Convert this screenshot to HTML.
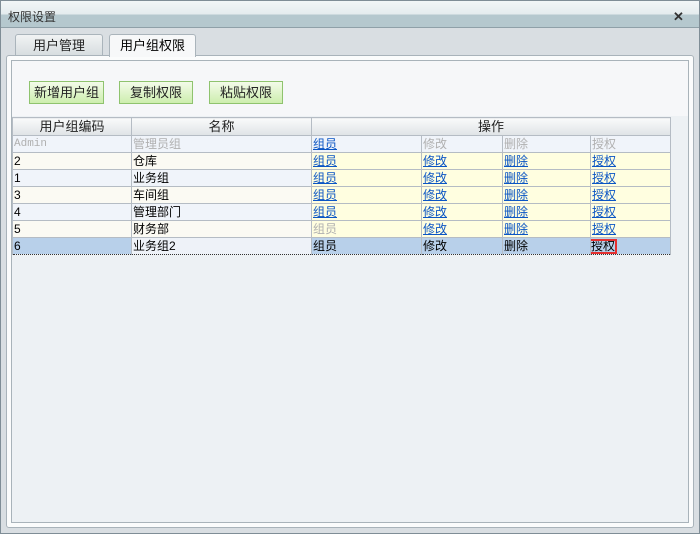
<!DOCTYPE html>
<html><head><meta charset="utf-8"><style>
*{margin:0;padding:0;box-sizing:border-box}
body{width:700px;height:534px;background:#d9dee2;font-family:"Liberation Sans","WenQuanYi Zen Hei","Noto Sans CJK SC",sans-serif;font-size:12px;position:relative;overflow:hidden;color:#000}
.frame{position:absolute;left:0;top:0;width:700px;height:534px;border:1px solid #7f8d96}
.title{position:absolute;left:1px;top:1px;width:698px;height:27px;background:linear-gradient(#f2f6f7 0,#e5ecee 13px,#b5c8ce 14px,#b5c8ce 100%);border-bottom:1px solid #8fa0a8}
.title .tt{position:absolute;left:7px;top:7px;color:#333;font-size:12px}
.x{position:absolute;left:672px;top:8px;font-size:13px;color:#333;font-weight:bold}
.tab{position:absolute;top:34px;height:22px;border:1px solid #aab4bb;border-bottom:none;border-radius:3px 3px 0 0;text-align:center;line-height:21px;font-size:13px}
.t1{left:15px;width:88px;background:linear-gradient(#f1f3f4,#d6dcdf);color:#222}
.t2{left:109px;width:87px;height:23px;background:#f7f8f9;z-index:2}
.p1{position:absolute;left:6px;top:55px;width:688px;height:473px;border:1px solid #a9b3ba;background:#fbfcfc;border-radius:3px}
.p2{position:absolute;left:11px;top:60px;width:678px;height:463px;border:1px solid #a9b3ba;background:#edf1f4}
.top{position:absolute;left:12px;top:61px;width:676px;height:55px;background:#f6f7f9}
.btn{position:absolute;top:81px;height:23px;border:1px solid #8fc36e;background:linear-gradient(#f3fbe9,#cdeeae);text-align:center;line-height:21px;font-size:13px;color:#222}
table{position:absolute;left:12px;top:117px;border-collapse:collapse;table-layout:fixed;width:658px}
td,th{border:1px solid #b5bcc4;height:17px;padding:0 1px;white-space:nowrap;overflow:hidden;font-weight:normal;line-height:15px;text-align:left}
th{background:linear-gradient(#f9fafa,#dfe3e6);text-align:center;height:18px;font-size:13px;font-weight:normal;color:#222}
.a td{background:#f0f4fa}.b td{background:#fbfaf3}
tr.a td.o,tr.b td.o{background:#fffee0}
tr.g td.o{background:#f0f4fa}
a{color:#0b55c4;text-decoration:underline}
.gr{color:#b0b0b0}
.mono{font-family:"Liberation Mono",monospace;font-size:11px}
tr.s td{background:#b8d0ea;border-top:1px dotted #333;border-bottom:1px dotted #333}
tr.s td.n{background:#eef2f8}
.red{outline:2px solid #e53030;outline-offset:-2px}
</style></head><body>
<div class="frame"></div>
<div class="title"><span class="tt">权限设置</span><span class="x">✕</span></div>
<div class="tab t1">用户管理</div>
<div class="tab t2">用户组权限</div>
<div class="p1"></div>
<div class="p2"></div>
<div class="top"></div>
<div class="btn" style="left:29px;width:75px">新增用户组</div>
<div class="btn" style="left:119px;width:74px">复制权限</div>
<div class="btn" style="left:209px;width:74px">粘贴权限</div>
<table>
<colgroup><col style="width:119px"><col style="width:180px"><col style="width:110px"><col style="width:81px"><col style="width:88px"><col style="width:80px"></colgroup>
<tr><th>用户组编码</th><th>名称</th><th colspan="4">操作</th></tr>
<tr class="a g"><td class="mono gr">Admin</td><td class="gr">管理员组</td><td class="o"><a>组员</a></td><td class="o gr">修改</td><td class="o gr">删除</td><td class="o gr">授权</td></tr>
<tr class="b"><td>2</td><td>仓库</td><td class="o"><a>组员</a></td><td class="o"><a>修改</a></td><td class="o"><a>删除</a></td><td class="o"><a>授权</a></td></tr>
<tr class="a"><td>1</td><td>业务组</td><td class="o"><a>组员</a></td><td class="o"><a>修改</a></td><td class="o"><a>删除</a></td><td class="o"><a>授权</a></td></tr>
<tr class="b"><td>3</td><td>车间组</td><td class="o"><a>组员</a></td><td class="o"><a>修改</a></td><td class="o"><a>删除</a></td><td class="o"><a>授权</a></td></tr>
<tr class="a"><td>4</td><td>管理部门</td><td class="o"><a>组员</a></td><td class="o"><a>修改</a></td><td class="o"><a>删除</a></td><td class="o"><a>授权</a></td></tr>
<tr class="b"><td>5</td><td>财务部</td><td class="o gr">组员</td><td class="o"><a>修改</a></td><td class="o"><a>删除</a></td><td class="o"><a>授权</a></td></tr>
<tr class="s"><td>6</td><td class="n">业务组2</td><td>组员</td><td>修改</td><td>删除</td><td><span class="red" style="display:inline-block;padding:0 2px;margin-left:-3px">授权</span></td></tr>
</table>
</body></html>
